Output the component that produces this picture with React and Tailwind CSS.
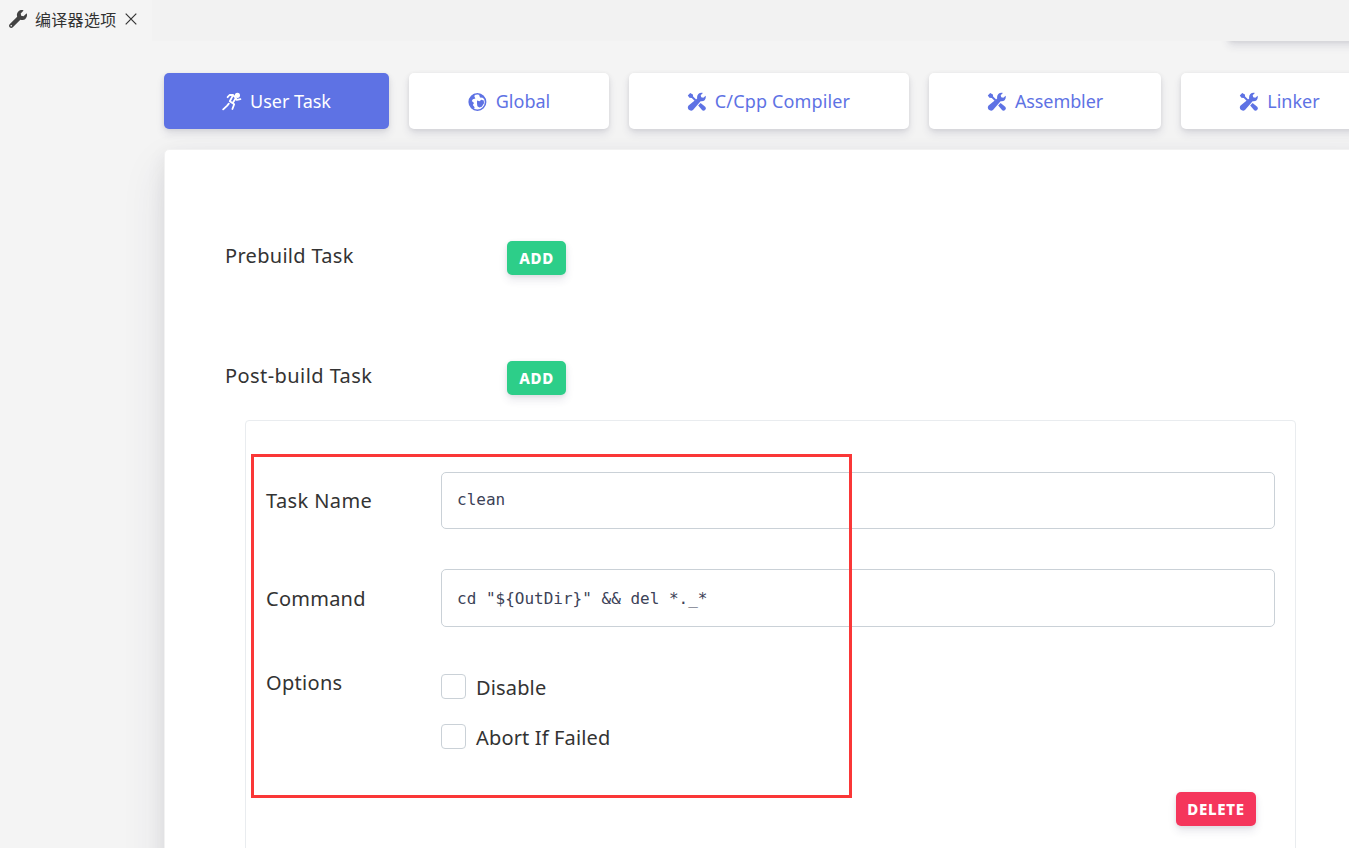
import { FaWrench } from "react-icons/fa";

function RunIcon() {
  return (
    <svg viewBox="0 0 20 20" className="h-5 w-5" fill="none" stroke="currentColor" strokeWidth="1.8" strokeLinecap="round" strokeLinejoin="round">
      <circle cx="15.4" cy="4.3" r="2.6" fill="currentColor" stroke="none" />
      <path d="M5.6 6.2 L7.6 4 L11 4 L12.8 5.8 L14.8 8.9 L18.4 8.2" />
      <path d="M10.8 4.6 L7.8 10.2 L12.2 13.2 L10.4 18" />
      <path d="M13.6 7.6 L11 11.6" />
      <path d="M6.8 12.6 L5.2 14.6 L1.2 18.4" />
    </svg>
  );
}

function WorldIcon() {
  return (
    <svg viewBox="0 0 20 20" className="h-5 w-5">
      <circle cx="9.4" cy="11" r="8.2" fill="none" stroke="currentColor" strokeWidth="1.6" />
      <path fill="currentColor" d="M7 2.8 L6.4 5.6 L7.4 7.4 L4.8 8.2 L3.8 10 L6 12 L4.8 14 L6.6 16.2 L6 18.2 C2.6 16.2 1 13 1.2 10 C2 6.4 4 3.8 7 2.8Z" />
      <path fill="currentColor" d="M9 9.4 L11.6 10.2 L13.2 8.8 L15.8 9.6 L16 12.2 L13.8 15.8 L11.4 16.4 L9.4 15.2 L9 12.6Z" />
      <path fill="currentColor" d="M10.8 3 L12 6.6 L14.6 6.8 L16.6 8.2 L17.2 8 L15 4.6Z" />
    </svg>
  );
}

function ToolsIcon() {
  return (
    <svg viewBox="0 0 20 20" className="h-5 w-5" fill="currentColor">
      <path d="M3.2 1.9 L5.9 3.6 L6.1 5.6 L9.2 8.6 L7.8 10 L4.8 7 L2.4 6.8 L0.8 4.4Z" />
      <path d="M13.6 12 L18.2 15.8 C20 17.8 17.2 20.8 15.2 19.2 L11.2 14.6Z" />
      <path d="M15.9 1.9 L13.7 4.2 L14.2 6.2 L16.3 6.8 L18.7 4.8 C19.3 8.6 16.8 10.8 13.6 10.2 L6.2 18.8 C3.4 21.4 -1 17.6 1.6 14.6 L10.2 7.4 C9.4 3.8 12.4 1 15.9 1.9Z" />
    </svg>
  );
}

const tabs = [
  { label: "User Task", Icon: RunIcon, box: "w-[225px] bg-[#5e72e4] text-white" },
  { label: "Global", Icon: WorldIcon, box: "w-[200px] bg-white text-[#5e72e4]" },
  { label: "C/Cpp Compiler", Icon: ToolsIcon, box: "w-[280px] bg-white text-[#5e72e4] tracking-[0.15px] pr-[1px]" },
  { label: "Assembler", Icon: ToolsIcon, box: "w-[232px] bg-white text-[#5e72e4] tracking-[-0.1px]" },
  { label: "Linker", Icon: ToolsIcon, box: "w-[198px] bg-white text-[#5e72e4] pr-[1px]" },
];

function Button({ children, className }) {
  return (
    <button className={`h-[34px] rounded-[5px] pt-px text-[15px] font-extrabold tracking-[0.7px] text-white shadow-[0_5px_8px_rgba(50,50,93,0.11),0_1px_4px_rgba(0,0,0,0.08)] ${className}`}>
      {children}
    </button>
  );
}

function Field({ label, value, className, labelClass, inputClass }) {
  return (
    <label className={`flex items-center ${className}`}>
      <span className={`w-[175px] shrink-0 ${labelClass}`}>{label}</span>
      <input
        defaultValue={value}
        className={`h-full min-w-0 flex-1 rounded-[5px] border border-[#cad1d7] bg-white px-[15px] font-['DejaVu_Sans_Mono',monospace] text-[16px] tracking-normal text-[#3c4257] outline-none ${inputClass}`}
      />
    </label>
  );
}

function Check({ label }) {
  return (
    <label className="flex h-[25px] items-center gap-[10px]">
      <span className="h-[25px] w-[25px] rounded border border-[#cad1d7] bg-white" />
      <span className="pt-[2px] tracking-[0.15px]">{label}</span>
    </label>
  );
}

export default function App() {
  return (
    <div className="relative flex h-[848px] w-[1349px] flex-col overflow-hidden bg-[#f4f4f4] font-['Noto_Sans','Noto_Sans_CJK_SC',sans-serif] text-[#333]">
      <header className="flex h-[41px] shrink-0 bg-[#f2f2f2]">
        <div className="flex w-[152px] items-center bg-[#f4f4f4] pl-[9px]">
          <FaWrench className="mb-[3px] h-[18px] w-[18px] text-[#424242]" />
          <span className="mb-[3px] ml-[8px] font-['Noto_Sans_CJK_SC',sans-serif] text-[16px] tracking-[0.3px] whitespace-nowrap">编译器选项</span>
          <svg viewBox="0 0 12 12" className="mb-[3px] ml-[8px] h-3 w-3" stroke="#333" strokeWidth="1.2">
            <path d="M.7.7 11.3 11.3M11.3.7.7 11.3" />
          </svg>
        </div>
      </header>
      <main className="flex min-h-0 flex-1 flex-col overflow-hidden pl-[164px]">
        <div className="-mt-[34px] ml-[1064px] h-[34px] w-[180px] shrink-0 rounded bg-white shadow-[0_5px_8px_rgba(50,50,93,0.11),0_1px_4px_rgba(0,0,0,0.08)]" />
        <nav className="mt-[32px] flex w-[1300px] shrink-0 gap-[20px]">
          {tabs.map(({ label, Icon, box }) => (
            <a key={label} className={`flex h-14 shrink-0 items-center justify-center gap-[8px] rounded-[5px] text-[18px] whitespace-nowrap shadow-[0_5px_8px_rgba(50,50,93,0.11),0_1px_4px_rgba(0,0,0,0.08)] ${box}`}>
              <Icon />
              <span>{label}</span>
            </a>
          ))}
        </nav>
        <section className="mt-[20px] h-[900px] w-[1213px] shrink-0 rounded-[5px] border border-[#f2f2f2] bg-white pl-[60px] text-[20px] shadow-[0_19px_44px_rgba(50,50,93,0.1),0_6px_19px_rgba(0,0,0,0.07)]">
          <div className="mt-[91px] flex h-[34px]">
            <span className="w-[282px] tracking-[0.3px]">Prebuild Task</span>
            <Button className="w-[59px] bg-[#2dce89]">ADD</Button>
          </div>
          <div className="mt-[86px] flex h-[34px]">
            <span className="w-[282px] tracking-[0.43px]">Post-build Task</span>
            <Button className="w-[59px] bg-[#2dce89]">ADD</Button>
          </div>
          <div className="mt-[25px] ml-[20px] h-[500px] w-[1051px] rounded border border-[#e9ecef] px-[20px] pt-[51px]">
            <Field label="Task Name" value="clean" className="h-[57px]" labelClass="tracking-[0.4px]" inputClass="pb-[2px]" />
            <Field label="Command" value={'cd "${OutDir}" && del *._*'} className="mt-[40px] h-[58px]" labelClass="pt-[1px] tracking-[0.25px]" inputClass="" />
            <div className="mt-[47px] flex">
              <span className="-mt-[6px] w-[175px] tracking-[0.3px]">Options</span>
              <div className="flex flex-col gap-[25px]">
                <Check label="Disable" />
                <Check label="Abort If Failed" />
              </div>
            </div>
            <div className="mt-[43px] flex justify-end pr-[19px]">
              <Button className="w-[80px] bg-[#f5365c]">DELETE</Button>
            </div>
          </div>
        </section>
      </main>
      <div className="pointer-events-none absolute top-[454px] left-[251px] h-[344px] w-[601px] border-3 border-[#fa3737]" />
    </div>
  );
}
